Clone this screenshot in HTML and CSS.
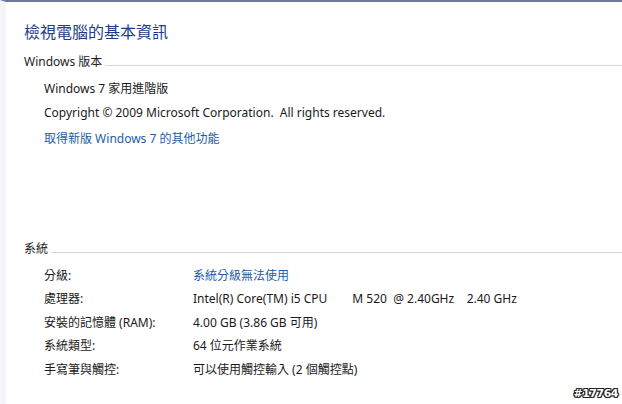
FILE: index.html
```html
<!DOCTYPE html>
<html lang="zh-Hant">

<head>
    <meta charset="UTF-8">
    <meta name="viewport" content="width=device-width, initial-scale=1.0">
    <title>系統</title>
    <link rel="stylesheet" href="styles.css">
</head>

<body>
    <div class="page">
        <h1 class="title">檢視電腦的基本資訊</h1>

        <section class="group">
            <h2 class="group-head"><span>Windows 版本</span></h2>
            <div class="group-body">
                <p class="row">Windows 7 家用進階版</p>
                <p class="row">Copyright © 2009 Microsoft Corporation.&nbsp; All rights reserved.</p>
                <p class="row link-row"><a href="#">取得新版 Windows 7 的其他功能</a></p>
            </div>
        </section>

        <section class="group system">
            <h2 class="group-head"><span>系統</span></h2>
            <div class="group-body info">
                <span class="label">分級:</span>
                <span class="value"><a href="#">系統分級無法使用</a></span>
                <span class="label">處理器:</span>
                <span class="value pre">Intel(R) Core(TM) i5 CPU        M 520  @ 2.40GHz    2.40 GHz</span>
                <span class="label">安裝的記憶體 (RAM):</span>
                <span class="value">4.00 GB (3.86 GB 可用)</span>
                <span class="label">系統類型:</span>
                <span class="value">64 位元作業系統</span>
                <span class="label">手寫筆與觸控:</span>
                <span class="value">可以使用觸控輸入 (2 個觸控點)</span>
            </div>
        </section>

        <!-- image board tag in the corner -->
        <div class="tag">#17764</div>
    </div>
</body>

</html>
```

FILE: styles.css
```css
html,
body {
    margin: 0;
    padding: 0;
    height: 100%;
}

body {
    font-family: "Noto Sans", "Noto Sans CJK TC", sans-serif;
    font-size: 12px;
    color: #1a1a1a;
    background-color: #fff;
}

.page {
    position: relative;
    box-sizing: border-box;
    height: 404px;
    border-top: 2px solid #6e7a9c;
    border-left: 6px solid #f3f5f9;
    padding: 20px 0 0 18px;
    overflow: hidden;
}

.title {
    margin: 0 0 12px;
    font-size: 16px;
    font-weight: normal;
    line-height: 20px;
    color: #1f3b88;
}

.group-head {
    display: flex;
    align-items: center;
    margin: 0;
    font-size: 12px;
    font-weight: normal;
    line-height: 16px;
    color: #222;
}

.group-head::after {
    content: "";
    flex: 1;
    margin: 6px 0 0 3px;
    border-top: 1px solid #d6d6d6;
}

.group-body {
    padding: 7px 0 0 20px;
}

.row {
    margin: 0;
    line-height: 24px;
}

.link-row {
    margin-top: 2px;
}

a {
    color: #1d5ca6;
    text-decoration: none;
}

.system {
    margin-top: 90px;
}

.info {
    display: grid;
    grid-template-columns: 149px 1fr;
    grid-auto-rows: 23.5px;
    align-items: center;
    padding-top: 6px;
}

.pre {
    white-space: pre;
}

.tag {
    position: absolute;
    right: 4px;
    bottom: 4px;
    font-family: "DejaVu Sans", sans-serif;
    font-size: 11px;
    font-weight: bold;
    letter-spacing: -0.5px;
    color: #fff;
    text-shadow: -1px 0 #222, 1px 0 #222, 0 -1px #222, 0 1px #222,
        -1px -1px #222, 1px 1px #222, -1px 1px #222, 1px -1px #222;
}
```
